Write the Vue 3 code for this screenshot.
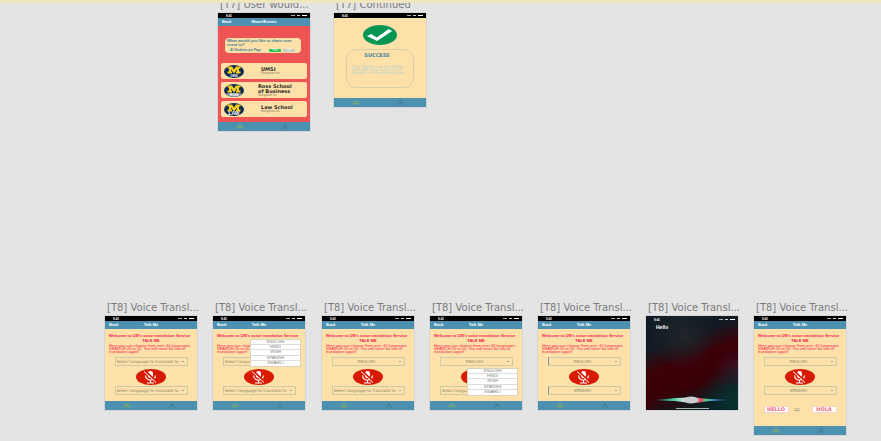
<script setup>
import { reactive } from 'vue'

const menuOptions = ['ENGLISH', 'HINDI', 'IRISH', 'SPANISH', 'SWAHILI']
const placeholder = 'Select language to translate to'
const voiceBoards = reactive([
  { id: 'v1', x: 105, from: placeholder, to: placeholder },
  { id: 'v2', x: 213, from: placeholder, to: placeholder, menu: 'upper' },
  { id: 'v3', x: 322, from: 'ENGLISH', to: placeholder },
  { id: 'v4', x: 430, from: 'ENGLISH', to: placeholder, menu: 'lower' },
  { id: 'v5', x: 538, from: 'ENGLISH', to: 'SPANISH', active: true },
  { id: 'v6', x: 646, listening: true },
  { id: 'v7', x: 754, from: 'ENGLISH', to: 'SPANISH', result: true },
])
const schools = [
  { name: 'UMSI', sub: 'Navigation Inc', tag: 'UMSI' },
  { name: 'Ross School of Business', sub: 'Navigation Inc', tag: 'ROSS' },
  { name: 'Law School', sub: 'Navigation Inc', tag: 'LAW' },
]
</script>

<template>
  <main class="canvas">
    <div class="strip"></div>

    <section class="board share">
      <h2 class="label">[T7] User would...</h2>
      <div class="screen red">
        <div class="status"><span>9:41</span><i class="signal"></i><i class="wifi"></i><i class="battery"></i></div>
        <header class="bar"><button class="back">Back</button><b>Share/Events</b></header>
        <div class="share-body">
          <div class="question">
            <p>What would you like to share user event to?</p>
            <div class="choices">
              <span>All Students per Page</span>
              <button class="yes">YES</button>
              <button class="no">NO</button>
            </div>
          </div>
          <article v-for="s in schools" :key="s.name" class="school">
            <svg class="crest" viewBox="0 0 40 26" preserveAspectRatio="none">
              <ellipse cx="20" cy="13" rx="20" ry="13" fill="#0d2b50" />
              <path d="M7 3h9l4 6 4-6h9v4h-3v6h3v4h-9v-4h2v-4l-6 8-6-8v4h2v4H7v-4h3V7H7z" fill="#f5cf1c" />
              <path v-if="s.tag === 'ROSS'" d="M4 18.500h32Q31 26 20 26T4 18.500z" fill="#8d9cab" />
              <text x="20" y="24" text-anchor="middle" class="crest-text" :class="{ big: s.tag === 'LAW' }">{{ s.tag }}</text>
            </svg>
            <div class="school-text">
              <h3>{{ s.name }}</h3>
              <small>{{ s.sub }}</small>
            </div>
          </article>
        </div>
        <nav class="tabs">
          <button aria-label="Home"><svg class="tab-icon home" viewBox="0 0 8 5"><path d="M1 4.500V3Q4 -1 7 3v1.500M3 4.500V3h2v1.500" /></svg></button>
          <button aria-label="Profile"><svg class="tab-icon" viewBox="0 0 8 5"><path d="M1 5Q1.500 3 4 3T7 5M2.500 1.600Q4 -.6 5.500 1.600Q4 4 2.500 1.600" /></svg></button>
        </nav>
      </div>
    </section>

    <section class="board done">
      <h2 class="label">[T7] Continued</h2>
      <div class="screen">
        <div class="status"><span>9:41</span><i class="signal"></i><i class="wifi"></i><i class="battery"></i></div>
        <div class="done-body">
          <svg class="check" viewBox="0 0 70 40" preserveAspectRatio="none">
            <ellipse cx="35" cy="20" rx="35" ry="20" fill="#069653" />
            <path d="M8 22l9-4 11 7L53 8l7 4-31 20z" fill="#fff" />
          </svg>
          <div class="notice">
            <h3>SUCCESS</h3>
            <p>Your words can be shared with UM stay active until people in the whole group</p>
          </div>
        </div>
        <nav class="tabs">
          <button aria-label="Home"><svg class="tab-icon home" viewBox="0 0 8 5"><path d="M1 4.500V3Q4 -1 7 3v1.500M3 4.500V3h2v1.500" /></svg></button>
          <button aria-label="Profile"><svg class="tab-icon" viewBox="0 0 8 5"><path d="M1 5Q1.500 3 4 3T7 5M2.500 1.600Q4 -.6 5.500 1.600Q4 4 2.500 1.600" /></svg></button>
        </nav>
      </div>
    </section>

    <section v-for="b in voiceBoards" :key="b.id" class="board voice" :style="{ left: b.x + 'px' }">
      <h2 class="label">[T8] Voice Transl...</h2>

      <div v-if="b.listening" class="screen listening">
        <div class="status clear"><span>9:41</span><i class="signal"></i><i class="wifi"></i><i class="battery"></i></div>
        <p class="said">Hello</p>
        <svg class="wave" viewBox="0 0 92 10" preserveAspectRatio="none">
          <defs>
            <linearGradient id="waveFill">
              <stop offset="0" stop-color="#18404a" stop-opacity="0" />
              <stop offset=".18" stop-color="#2c8580" />
              <stop offset=".3" stop-color="#58d3a3" />
              <stop offset=".42" stop-color="#e4e4ec" />
              <stop offset=".54" stop-color="#d9dde0" />
              <stop offset=".6" stop-color="#e93d59" />
              <stop offset=".67" stop-color="#48d391" />
              <stop offset=".76" stop-color="#397cbd" />
              <stop offset="1" stop-color="#194050" stop-opacity="0" />
            </linearGradient>
          </defs>
          <path d="M4 5Q22 4 29 3Q37 3 45 2Q53 3 63 4Q72 4 88 5Q72 6 63 6Q53 8 45 8Q36 7 29 6Q21 6 4 5z" fill="url(#waveFill)" />
          <ellipse cx="45" cy="5" rx="7" ry="3.500" fill="#c9cdd0" />
        </svg>
        <div class="home-line"></div>
      </div>

      <div v-else class="screen">
        <div class="status"><span>9:41</span><i class="signal"></i><i class="wifi"></i><i class="battery"></i></div>
        <header class="bar"><button class="back">Back</button><b>Talk Me</b></header>
        <div class="voice-body">
          <p class="welcome">Welcome to UM's voice translation Service</p>
          <p class="name">TALK ME</p>
          <p class="intro">Here you can choose from over 40 languages<br>SEARCH 20 to 50, You will never be lost in<br>translation again!</p>
          <select v-model="b.from" class="pick" :class="{ active: b.active, unset: b.from === placeholder }" aria-label="Translate from">
            <option>{{ placeholder }}</option>
            <option v-for="o in menuOptions" :key="o">{{ o }}</option>
          </select>
          <button class="mic" aria-label="Microphone">
            <svg viewBox="0 0 20 14">
              <rect x="7" y="1" width="5" height="7" rx="2.500" fill="#fff" />
              <path d="M4.500 5.500Q5 10 9.500 10T14.500 5.500M9.500 10v3M6 13h7" fill="none" stroke="#fff" stroke-width="1.200" />
              <path d="M4 1l12 11" stroke="#d81a05" stroke-width="2" />
              <path d="M3 1.500l12 11" stroke="#fff" stroke-width="1" />
            </svg>
          </button>
          <select v-model="b.to" class="pick" :class="{ active: b.active, unset: b.to === placeholder }" aria-label="Translate to">
            <option>{{ placeholder }}</option>
            <option v-for="o in menuOptions" :key="o">{{ o }}</option>
          </select>
          <div v-if="b.result" class="result"><output>HELLO</output><span>=</span><output>HOLA</output></div>
        </div>
        <nav class="tabs">
          <button aria-label="Home"><svg class="tab-icon home" viewBox="0 0 8 5"><path d="M1 4.500V3Q4 -1 7 3v1.500M3 4.500V3h2v1.500" /></svg></button>
          <button aria-label="Profile"><svg class="tab-icon" viewBox="0 0 8 5"><path d="M1 5Q1.500 3 4 3T7 5M2.500 1.600Q4 -.6 5.500 1.600Q4 4 2.500 1.600" /></svg></button>
        </nav>
        <div v-if="b.menu" class="menu" :class="b.menu">
          <button v-for="o in menuOptions" :key="o">{{ o }}</button>
        </div>
      </div>
    </section>
  </main>
</template>

<style>
body { margin: 0; background: #e4e4e4; }
</style>

<style scoped>
* { box-sizing: border-box; }
.canvas {
  position: relative;
  min-height: 100vh;
  overflow: hidden;
  background: #e4e4e4;
  font-family: "Liberation Sans", Arial, sans-serif;
}
.strip { position: relative; z-index: 1; height: 3px; background: #f0e7bf; }
h2, h3, p { margin: 0; }
button { padding: 0; border: 0; background: none; font-family: inherit; }

.board { position: absolute; width: 92px; }
.share { left: 218px; top: -2px; }
.done { left: 334px; top: -2px; }
.voice { top: 301px; }
.label {
  height: 15px;
  padding-left: 2px;
  font: 400 10px/13px "DejaVu Sans", sans-serif;
  color: #7b7b7b;
  white-space: nowrap;
}
.screen {
  position: relative;
  display: flex;
  flex-direction: column;
  background: #fde1a9;
  outline: 1px solid #d3d5d6;
}
.screen.red { background: #ee5453; }

.status {
  display: flex;
  align-items: center;
  gap: 2px;
  height: 5px;
  padding: 0 3px 0 8px;
  background: #000;
  color: #fff;
  font-size: 3px;
  line-height: 4px;
  font-weight: 700;
}
.status.clear { background: none; height: 7px; }
.status span { margin-right: auto; }
.signal { width: 4px; height: 1px; background: #aaa; }
.wifi { width: 3px; height: 1px; background: #ccc; }
.battery { width: 5px; height: 1px; background: #fff; }

.bar {
  display: grid;
  grid-template-columns: 1fr 2fr 1fr;
  align-items: center;
  height: 8px;
  padding: 0 4px;
  background: #4d91b0;
  color: #fff;
  font-size: 4px;
  line-height: 6px;
  text-align: center;
}
.back { color: #fff; font-size: 4px; font-weight: 700; line-height: 6px; text-align: left; }

.tabs { display: grid; grid-template-columns: 1fr 1fr; height: 9px; padding-right: 3px; background: #4d91b0; }
.tabs button { display: grid; place-items: center; }
.tab-icon { width: 8px; height: 5px; fill: none; stroke: #487891; stroke-width: .8; }
.tab-icon.home { stroke: #8fb55c; }

.share-body { display: flex; flex-direction: column; gap: 3px; padding: 12px 3px 5px; }
.question {
  height: 15px;
  margin: 0 6px 7px 4px;
  padding: 1px 2px;
  border-radius: 4px;
  background: #fde1a9;
  color: #3d7d92;
  font-size: 3px;
  line-height: 4px;
  font-weight: 700;
}
.question p { font: 700 4px/4px "Liberation Sans", sans-serif; }
.choices { display: flex; align-items: center; gap: 2px; padding: 1px 4px 0 3px; }
.choices span { flex: 1; white-space: nowrap; }
.choices button { width: 12px; height: 3px; border-radius: 1px; color: #fff; font-size: 3px; line-height: 3px; }
.choices .yes { background: #25c352; }
.choices .no { background: #c9c9bd; }
.school {
  display: flex;
  align-items: center;
  height: 16px;
  padding: 0 3px;
  border-radius: 2px;
  background: #fde1a9;
}
.crest { width: 20px; height: 13px; }
.crest-text { fill: #fff; font: 700 6px "Liberation Sans", sans-serif; }
.crest-text.big { font-size: 10px; }
.school-text { display: flex; flex-direction: column; width: 40px; margin-left: 14px; color: #2e2923; }
.school h3 { font: 700 5px/5px "DejaVu Sans", sans-serif; }
.school:not(:nth-child(3)) .school-text { padding-left: 3px; }
.school small { font-size: 3px; line-height: 3px; color: #8a7c62; }

.done-body { display: flex; flex-direction: column; align-items: center; gap: 4px; padding: 7px 0 10px; }
.check { width: 34px; height: 20px; }
.notice { width: 68px; height: 39px; padding: 3px 5px; border: 1px solid #d9cfaa; border-radius: 10px; text-align: center; }
.notice h3 { margin-bottom: 7px; padding-right: 6px; font: 700 5px/5px "DejaVu Sans", sans-serif; color: #4384a0; }
.notice p { font: 400 4px/3px "DejaVu Sans", sans-serif; color: #b7cfcb; text-align: left; }

.voice-body { display: flex; flex-direction: column; align-items: center; padding: 4px 4px 6px; color: #f5204e; font-size: 4px; text-align: center; }
.welcome, .name { line-height: 5px; font-weight: 700; white-space: nowrap; }
.welcome { align-self: flex-start; }
.intro { align-self: flex-start; margin: 1px 0 4px; line-height: 3px; text-align: left; white-space: nowrap; }
.pick {
  width: 73px;
  height: 9px;
  padding: 0 4px 0 1px;
  border: 1px solid #c9cba6;
  border-radius: 0;
  background: linear-gradient(#9aa596, #9aa596) right 3px center / 2px 1px no-repeat;
  color: #8d846b;
  font: 400 4px/6px "DejaVu Sans", sans-serif;
  text-align: center;
  text-align-last: center;
  appearance: none;
}
.pick.unset { text-align: left; text-align-last: left; }
.pick.active { border-left-color: #789fa0; }
.mic {
  display: grid;
  place-items: center;
  width: 30px;
  height: 16px;
  margin: 3px 0 1px;
  border-radius: 50%;
  background: #d81a05;
}
.mic svg { width: 20px; height: 14px; }
.result { display: flex; align-items: center; width: 73px; margin: 11px 0 7px; color: #99926f; }
.result span { margin: 0 auto 0 5px; font: 400 8px/7px "DejaVu Sans", sans-serif; }
.result output { width: 25px; height: 7px; background: #fff; border: 1px solid #f3d6c9; color: #f0657a; font: 700 5px/5px "DejaVu Sans", sans-serif; }
.menu {
  position: absolute;
  left: 37px;
  display: grid;
  grid-template-rows: repeat(5, 1fr);
  width: 51px;
  height: 28px;
  background: #fff;
  border: 1px solid #ddd3bd;
}
.menu.upper { top: 23px; }
.menu.lower { top: 52px; }
.menu button { border-bottom: 1px solid #ddd; color: #7d7d7d; font-size: 4px; line-height: 4px; }
.menu button:last-child { border-bottom: 0; }

.listening {
  height: 94px;
  color: #fff;
  background:
    radial-gradient(circle at 100% 90%, #06332f 0, transparent 40px),
    radial-gradient(circle at 100% 58%, #3c1029 0, transparent 24px),
    radial-gradient(circle at 40% 20%, #1f2529 0, transparent 34px),
    linear-gradient(160deg, #101b26 0, #121a23 28%, #3c0007 46%, #380006 68%, #10191f 84%, #071d20 100%);
}
.said { padding: 1px 0 0 10px; font-size: 5px; line-height: 6px; font-weight: 700; }
.wave { width: 100%; height: 10px; margin-top: auto; }
.home-line { width: 33px; height: 1px; margin: 3px auto 1px; background: #a7b0b0; }
</style>
